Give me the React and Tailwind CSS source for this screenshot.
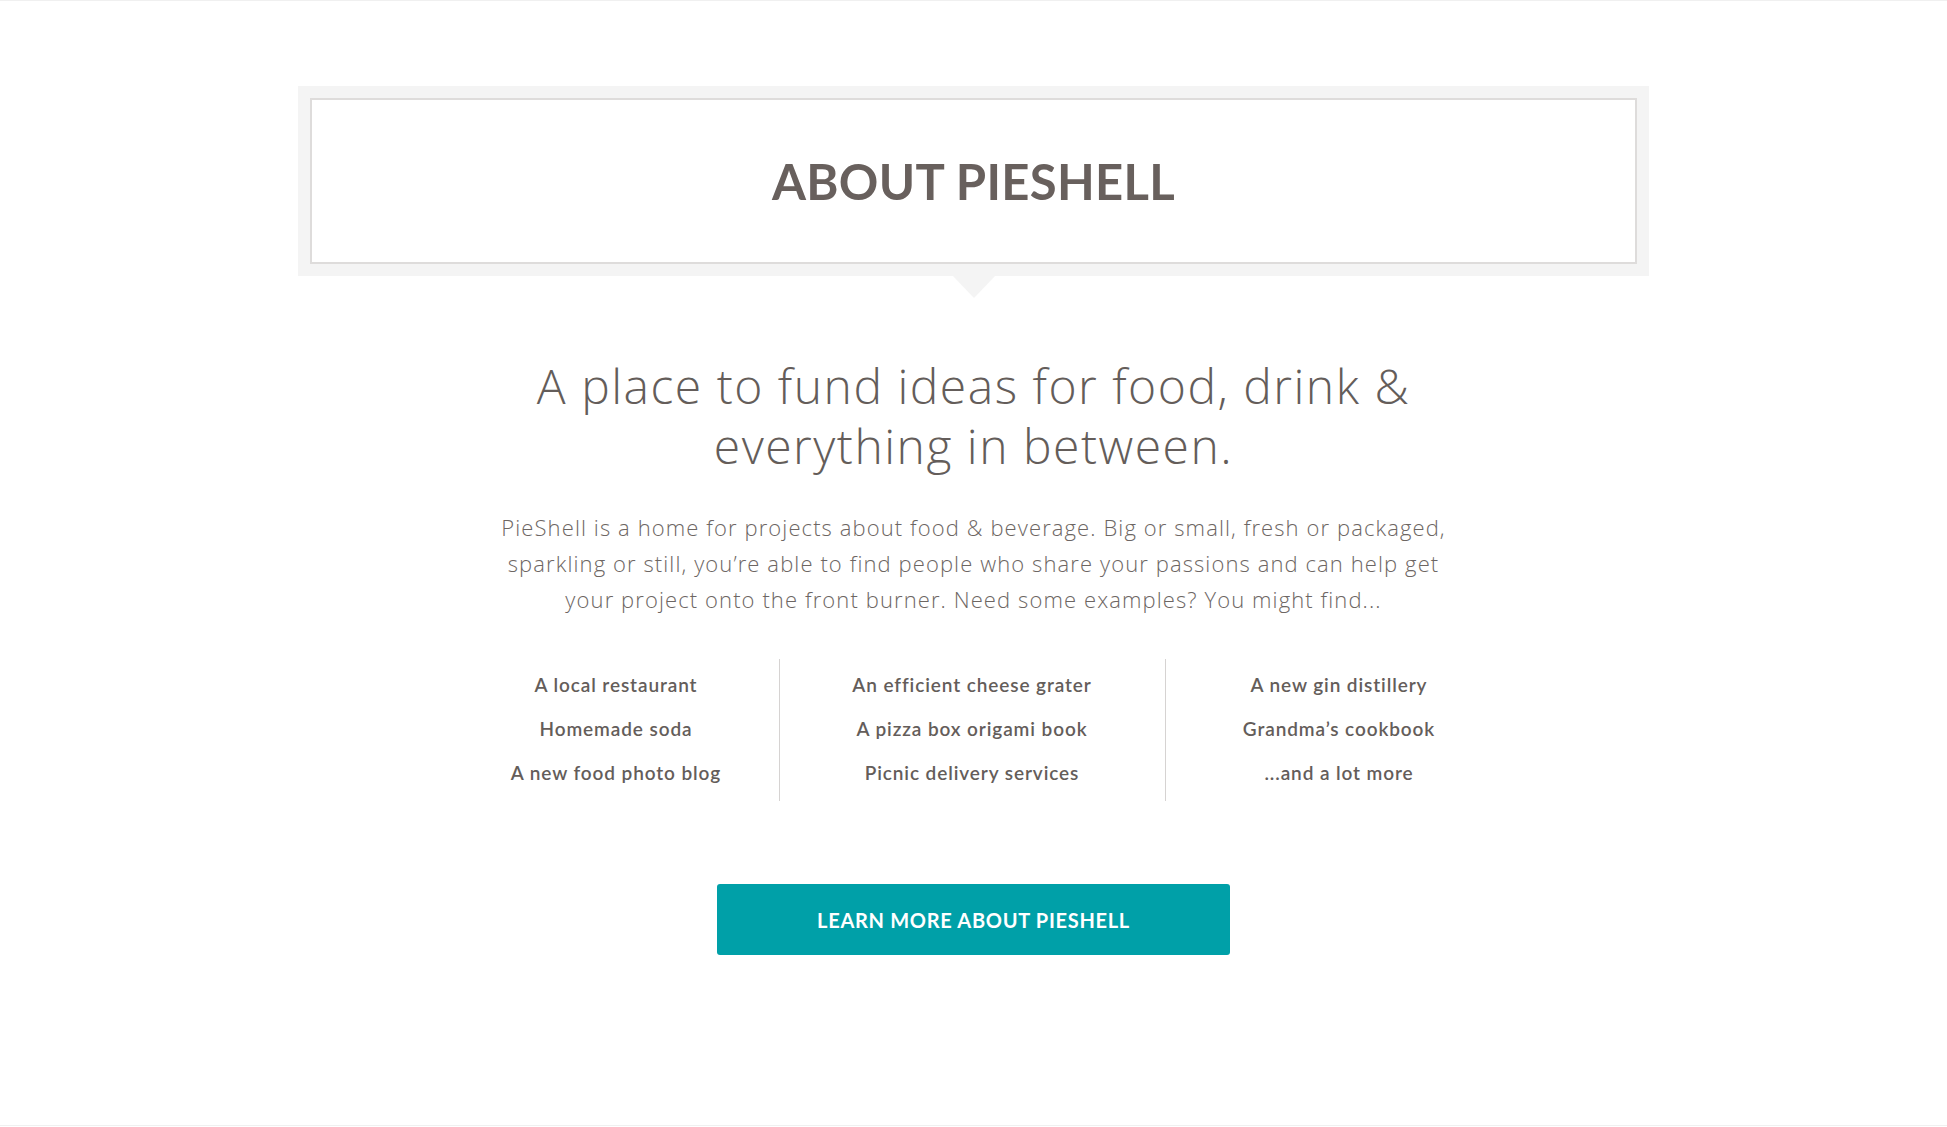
import React from "react";

const columns = [
  { width: "w-[325px]", items: ["A local restaurant", "Homemade soda", "A new food photo blog"] },
  { width: "w-[386px]", items: ["An efficient cheese grater", "A pizza box origami book", "Picnic delivery services"] },
  { width: "w-[348px]", items: ["A new gin distillery", "Grandma’s cookbook", "...and a lot more"] },
];

const App = () => {
  return (
    <div className="h-[1126px] bg-white border-t border-b border-[#f0f0f0] font-['Lato',sans-serif] text-[#67605d]">
      {/* header box */}
      <div className="relative w-[1351px] mx-auto mt-[85px] p-3 bg-[#f4f4f4]">
        <div className="h-[166px] flex items-center justify-center bg-white border-2 border-[#dedcdb]">
          <h1 className="text-[49px] font-bold tracking-[0.3px] text-[#68605d] leading-none">ABOUT PIESHELL</h1>
        </div>
        <div className="absolute top-full left-1/2 -translate-x-1/2 w-0 h-0 border-l-[21px] border-r-[21px] border-t-[22px] border-l-transparent border-r-transparent border-t-[#f4f4f4]" />
      </div>

      <h2 className="mt-[80px] text-center font-['Open_Sans',sans-serif] text-[48px] leading-[60px] font-light tracking-[1.5px] text-[#645d5a]">
        A place to fund ideas for food, drink &amp;
        <br />
        everything in between.
      </h2>

      <p className="mt-[33px] text-center font-['Open_Sans',sans-serif] text-[22px] leading-[36px] font-light tracking-[1.1px] text-[#6d6663]">
        PieShell is a home for projects about food &amp; beverage. Big or small, fresh or packaged,
        <br />
        sparkling or still, you’re able to find people who share your passions and can help get
        <br />
        your project onto the front burner. Need some examples? You might find...
      </p>

      <div className="mt-[42px] w-[1078px] mx-auto pl-[19px] flex">
        {columns.map((col, i) => (
          <div
            key={i}
            className={`${col.width} pt-[4px] pb-[6px] text-center text-[19px] leading-[44px] font-semibold tracking-[0.9px] text-[#645d5a] ${
              i > 0 ? "border-l border-[#d6d3d2]" : ""
            }`}
          >
            {col.items.map((item) => (
              <div key={item}>{item}</div>
            ))}
          </div>
        ))}
      </div>

      <div className="mt-[83px] flex justify-center">
        <button className="w-[513px] h-[71px] rounded-[3px] bg-[#00a0a8] text-white text-[20px] font-bold tracking-[0.7px]">
          LEARN MORE ABOUT PIESHELL
        </button>
      </div>
    </div>
  );
};

export default App;
